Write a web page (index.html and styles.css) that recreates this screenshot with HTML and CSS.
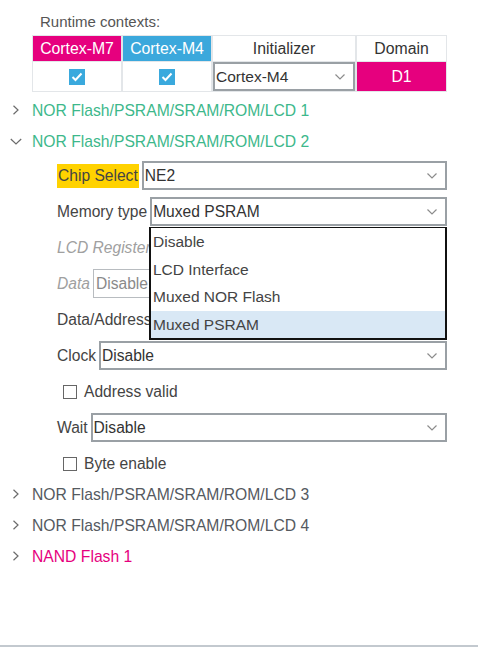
FILE: index.html
```html
<!DOCTYPE html>
<html>
<head>
<meta charset="utf-8">
<link rel="stylesheet" href="styles.css">
</head>
<body>
<div class="panel">
  <div class="title">Runtime contexts:</div>
  <div class="ctx">
    <div class="hcell pink">Cortex-M7</div>
    <div class="hcell blue">Cortex-M4</div>
    <div class="hcell">Initializer</div>
    <div class="hcell">Domain</div>
    <div class="cell"><span class="cbox"><svg width="12" height="10" viewBox="0 0 12 10"><path d="M1.5 5 L4.5 8 L10.5 1.5" fill="none" stroke="#fff" stroke-width="2"/></svg></span></div>
    <div class="cell"><span class="cbox"><svg width="12" height="10" viewBox="0 0 12 10"><path d="M1.5 5 L4.5 8 L10.5 1.5" fill="none" stroke="#fff" stroke-width="2"/></svg></span></div>
    <div class="cell"><div class="select sel-full"><span>Cortex-M4</span><svg class="caret" width="10" height="6" viewBox="0 0 10 6"><path d="M0.5 0.5 L5 5 L9.5 0.5" fill="none" stroke="#8c8c8c" stroke-width="1.2"/></svg></div></div>
    <div class="cell pink dom">D1</div>
  </div>

  <div class="tree-row green"><svg class="tw" width="8" height="10" viewBox="0 0 8 10"><path d="M1.5 0.8 L6 5 L1.5 9.2" fill="none" stroke="#6b6b6b" stroke-width="1.2"/></svg>NOR Flash/PSRAM/SRAM/ROM/LCD 1</div>
  <div class="tree-row green"><svg class="tw down" width="12" height="7" viewBox="0 0 12 7"><path d="M0.8 1 L6 6 L11.2 1" fill="none" stroke="#6b6b6b" stroke-width="1.2"/></svg>NOR Flash/PSRAM/SRAM/ROM/LCD 2</div>

  <div class="form">
    <div class="row"><span class="lbl hl">Chip Select</span><div class="select"><span>NE2</span><svg class="caret" width="10" height="6" viewBox="0 0 10 6"><path d="M0.5 0.5 L5 5 L9.5 0.5" fill="none" stroke="#8c8c8c" stroke-width="1.2"/></svg></div></div>
    <div class="row"><span class="lbl">Memory type</span><div class="select"><span>Muxed PSRAM</span><svg class="caret" width="10" height="6" viewBox="0 0 10 6"><path d="M0.5 0.5 L5 5 L9.5 0.5" fill="none" stroke="#8c8c8c" stroke-width="1.2"/></svg></div></div>
    <div class="row"><span class="lbl dis clip">LCD Register Select</span></div>
    <div class="row"><span class="lbl dis">Data</span><div class="select disabled"><span>Disable</span></div></div>
    <div class="row"><span class="lbl clip">Data/Address</span></div>
    <div class="row"><span class="lbl">Clock</span><div class="select"><span>Disable</span><svg class="caret" width="10" height="6" viewBox="0 0 10 6"><path d="M0.5 0.5 L5 5 L9.5 0.5" fill="none" stroke="#8c8c8c" stroke-width="1.2"/></svg></div></div>
    <div class="row chk"><span class="box"></span><span class="lbl">Address valid</span></div>
    <div class="row"><span class="lbl">Wait</span><div class="select"><span>Disable</span><svg class="caret" width="10" height="6" viewBox="0 0 10 6"><path d="M0.5 0.5 L5 5 L9.5 0.5" fill="none" stroke="#8c8c8c" stroke-width="1.2"/></svg></div></div>
    <div class="row chk"><span class="box"></span><span class="lbl">Byte enable</span></div>

    <ul class="dropdown">
      <li>Disable</li>
      <li>LCD Interface</li>
      <li>Muxed NOR Flash</li>
      <li class="sel">Muxed PSRAM</li>
    </ul>
  </div>

  <div class="tree-row gray"><svg class="tw" width="8" height="10" viewBox="0 0 8 10"><path d="M1.5 0.8 L6 5 L1.5 9.2" fill="none" stroke="#6b6b6b" stroke-width="1.2"/></svg>NOR Flash/PSRAM/SRAM/ROM/LCD 3</div>
  <div class="tree-row gray"><svg class="tw" width="8" height="10" viewBox="0 0 8 10"><path d="M1.5 0.8 L6 5 L1.5 9.2" fill="none" stroke="#6b6b6b" stroke-width="1.2"/></svg>NOR Flash/PSRAM/SRAM/ROM/LCD 4</div>
  <div class="tree-row magenta"><svg class="tw" width="8" height="10" viewBox="0 0 8 10"><path d="M1.5 0.8 L6 5 L1.5 9.2" fill="none" stroke="#6b6b6b" stroke-width="1.2"/></svg>NAND Flash 1</div>
</div>
</body>
</html>
```

FILE: styles.css
```css
* { box-sizing: border-box; }
html, body { margin: 0; padding: 0; background: #fff; }
body {
  font-family: "Liberation Sans", Arial, sans-serif;
  font-size: 15px;
  color: #444;
}
.panel {
  height: 647px;
  border-bottom: 2px solid #c3c9cf;
  overflow: hidden;
  position: relative;
}
.title {
  padding: 13px 0 0 40px;
  line-height: 18px;
  color: #555;
}
.ctx {
  margin: 4px 0 0 32px;
  width: 415px;
  display: grid;
  grid-template-columns: 88px 88px 142px 89px;
  grid-template-rows: 25px 29px;
  column-gap: 2px;
  row-gap: 1px;
  padding: 1px;
  background: #e3e6e9;
}
.hcell, .cell {
  background: #fff;
  display: flex;
  align-items: center;
  justify-content: center;
  color: #333;
}
.hcell { font-size: 15.8px; }
.pink { background: #e6007e; color: #fff; }
.blue { background: #3ba8dc; color: #fff; }
.dom { color: #fff; font-size: 15.8px; }
.cbox {
  width: 16px;
  height: 16px;
  background: #3aa9dd;
  display: flex;
  align-items: center;
  justify-content: center;
}
.select {
  flex: 1;
  height: 29px;
  border: 2px solid #9aa0a5;
  display: flex;
  align-items: center;
  padding-left: 1px;
  padding-right: 8px;
  color: #333;
  background: #fff;
}
.select span { flex: 1; }
.sel-full { height: 100%; width: 100%; font-size: 15.5px; }
.caret { flex: none; }
.select.disabled { flex: none; width: 70px; border: 1px solid #b8bcc0; color: #8a8a8a; padding-left: 2px; }
.tree-row {
  height: 31px;
  display: flex;
  align-items: center;
  padding-left: 32px;
  position: relative;
  font-size: 15.7px;
}
.ctx + .tree-row { margin-top: 3px; }
.tw { position: absolute; left: 12px; top: 10px; }
.tw.down { left: 10px; top: 12px; }
.green { color: #3db88b; }
.gray { color: #555a5f; }
.magenta { color: #e6007e; }
.form {
  position: relative;
  padding: 4px 31px 1px 57px;
  display: flex;
  flex-direction: column;
  gap: 7px;
}
.row {
  height: 29px;
  display: flex;
  align-items: center;
  gap: 3px;
  font-size: 15.6px;
  white-space: nowrap;
}
.lbl { color: #444; }
.lbl.clip { max-width: 92px; overflow: hidden; }
.lbl.hl {
  background: #ffd200;
  height: 24px;
  line-height: 24px;
  padding: 0 1px;
}
.lbl.dis { color: #a0a0a0; font-style: italic; }
.row.chk { padding-left: 6px; gap: 7px; }
.box {
  width: 14px;
  height: 14px;
  border: 1.5px solid #666;
  background: #fff;
}
.dropdown {
  position: absolute;
  left: 149px;
  top: 70px;
  width: 298px;
  margin: 0;
  padding: 0;
  list-style: none;
  background: #fff;
  border: 2px solid #111;
  border-top-width: 1px;
  font-size: 15.5px;
}
.dropdown li {
  height: 27.5px;
  line-height: 27.5px;
  padding-left: 2px;
  color: #444;
}
.dropdown li.sel { background: #d9e8f5; }
```
